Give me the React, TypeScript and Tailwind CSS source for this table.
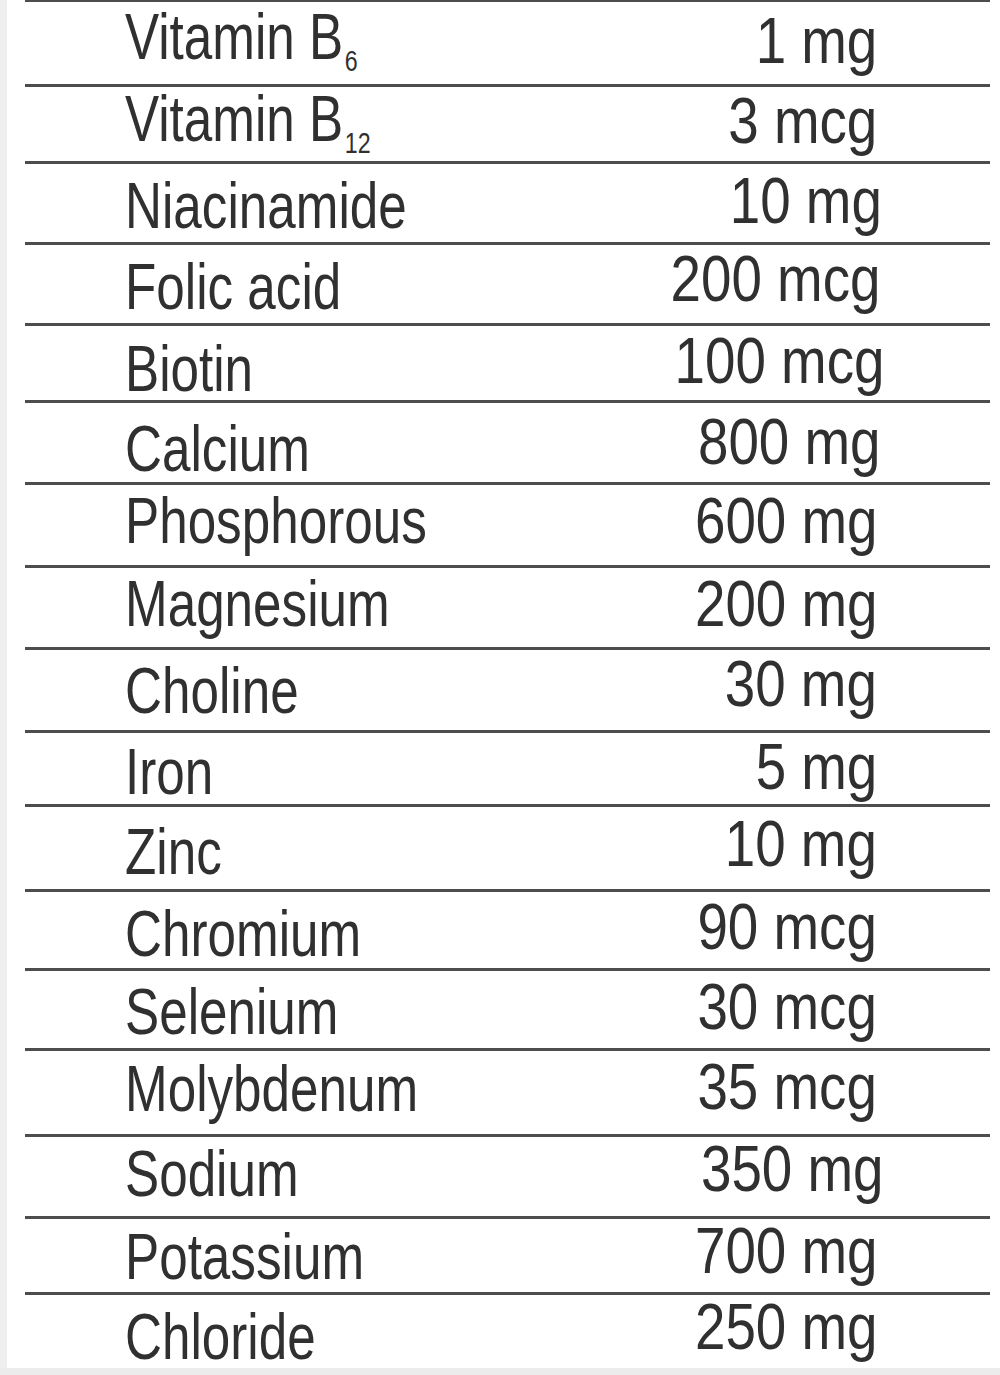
import React from "react";

type Row = {
  name: string;
  sub?: string;
  value: string;
  h: string;
  npt: string;
  vpt: string;
  vpr: string;
  first?: boolean;
};

const rows: Row[] = [
  { name: "Vitamin B", sub: "6", value: "1 mg", h: "h-[84px]", npt: "pt-[3px]", vpt: "pt-[7px]", vpr: "pr-[113px]", first: true },
  { name: "Vitamin B", sub: "12", value: "3 mcg", h: "h-[77px]", npt: "pt-[0px]", vpt: "pt-[2px]", vpr: "pr-[113px]" },
  { name: "Niacinamide", value: "10 mg", h: "h-[81px]", npt: "pt-[10px]", vpt: "pt-[5px]", vpr: "pr-[108px]" },
  { name: "Folic acid", value: "200 mcg", h: "h-[81px]", npt: "pt-[10px]", vpt: "pt-[2px]", vpr: "pr-[110px]" },
  { name: "Biotin", value: "100 mcg", h: "h-[77px]", npt: "pt-[11px]", vpt: "pt-[3px]", vpr: "pr-[106px]" },
  { name: "Calcium", value: "800 mg", h: "h-[82px]", npt: "pt-[14px]", vpt: "pt-[7px]", vpr: "pr-[110px]" },
  { name: "Phosphorous", value: "600 mg", h: "h-[83px]", npt: "pt-[4px]", vpt: "pt-[4px]", vpr: "pr-[113px]" },
  { name: "Magnesium", value: "200 mg", h: "h-[82px]", npt: "pt-[4px]", vpt: "pt-[4px]", vpr: "pr-[113px]" },
  { name: "Choline", value: "30 mg", h: "h-[83px]", npt: "pt-[9px]", vpt: "pt-[2px]", vpr: "pr-[113px]" },
  { name: "Iron", value: "5 mg", h: "h-[74px]", npt: "pt-[7px]", vpt: "pt-[2px]", vpr: "pr-[113px]" },
  { name: "Zinc", value: "10 mg", h: "h-[85px]", npt: "pt-[13px]", vpt: "pt-[5px]", vpr: "pr-[113px]" },
  { name: "Chromium", value: "90 mcg", h: "h-[79px]", npt: "pt-[10px]", vpt: "pt-[3px]", vpr: "pr-[113px]" },
  { name: "Selenium", value: "30 mcg", h: "h-[80px]", npt: "pt-[9px]", vpt: "pt-[4px]", vpr: "pr-[113px]" },
  { name: "Molybdenum", value: "35 mcg", h: "h-[86px]", npt: "pt-[6px]", vpt: "pt-[4px]", vpr: "pr-[113px]" },
  { name: "Sodium", value: "350 mg", h: "h-[82px]", npt: "pt-[5px]", vpt: "pt-[0px]", vpr: "pr-[107px]" },
  { name: "Potassium", value: "700 mg", h: "h-[76px]", npt: "pt-[6px]", vpt: "pt-[0px]", vpr: "pr-[113px]" },
  { name: "Chloride", value: "250 mg", h: "h-[76px]", npt: "pt-[10px]", vpt: "pt-[0px]", vpr: "pr-[113px]" },
];

export default function App() {
  return (
    <div
      className="w-[1000px] h-[1375px] bg-white flex flex-col overflow-hidden text-[#303030]"
      style={{ fontFamily: '"Liberation Sans Narrow", "Arial Narrow", "Liberation Sans", Arial, sans-serif' }}
    >
      <div className="flex flex-1">
        <div className="w-[7px] bg-[#efefef]" />
        <div className="ml-[18px] w-[965px] flex flex-col">
          {rows.map((r, i) => (
            <div
              key={i}
              className={
                "flex justify-between border-[#4d4d4d] " +
                r.h +
                " " +
                (r.first ? "border-t-[2px]" : "border-t-[3px]")
              }
            >
              <div className={"pl-[100px] text-[64px] leading-[64px] whitespace-nowrap " + r.npt}>
                <span className="inline-block origin-left scale-x-[0.8]">
                  {r.name}
                  {r.sub && (
                    <span className="text-[29px] leading-none relative top-[12px] ml-[2px]">{r.sub}</span>
                  )}
                </span>
              </div>
              <div className={"text-[64px] leading-[64px] whitespace-nowrap text-right " + r.vpt + " " + r.vpr}>
                <span className="inline-block origin-right scale-x-[0.855]">{r.value}</span>
              </div>
            </div>
          ))}
        </div>
      </div>
      <div className="h-[7px] bg-[#ececec]" />
    </div>
  );
}
